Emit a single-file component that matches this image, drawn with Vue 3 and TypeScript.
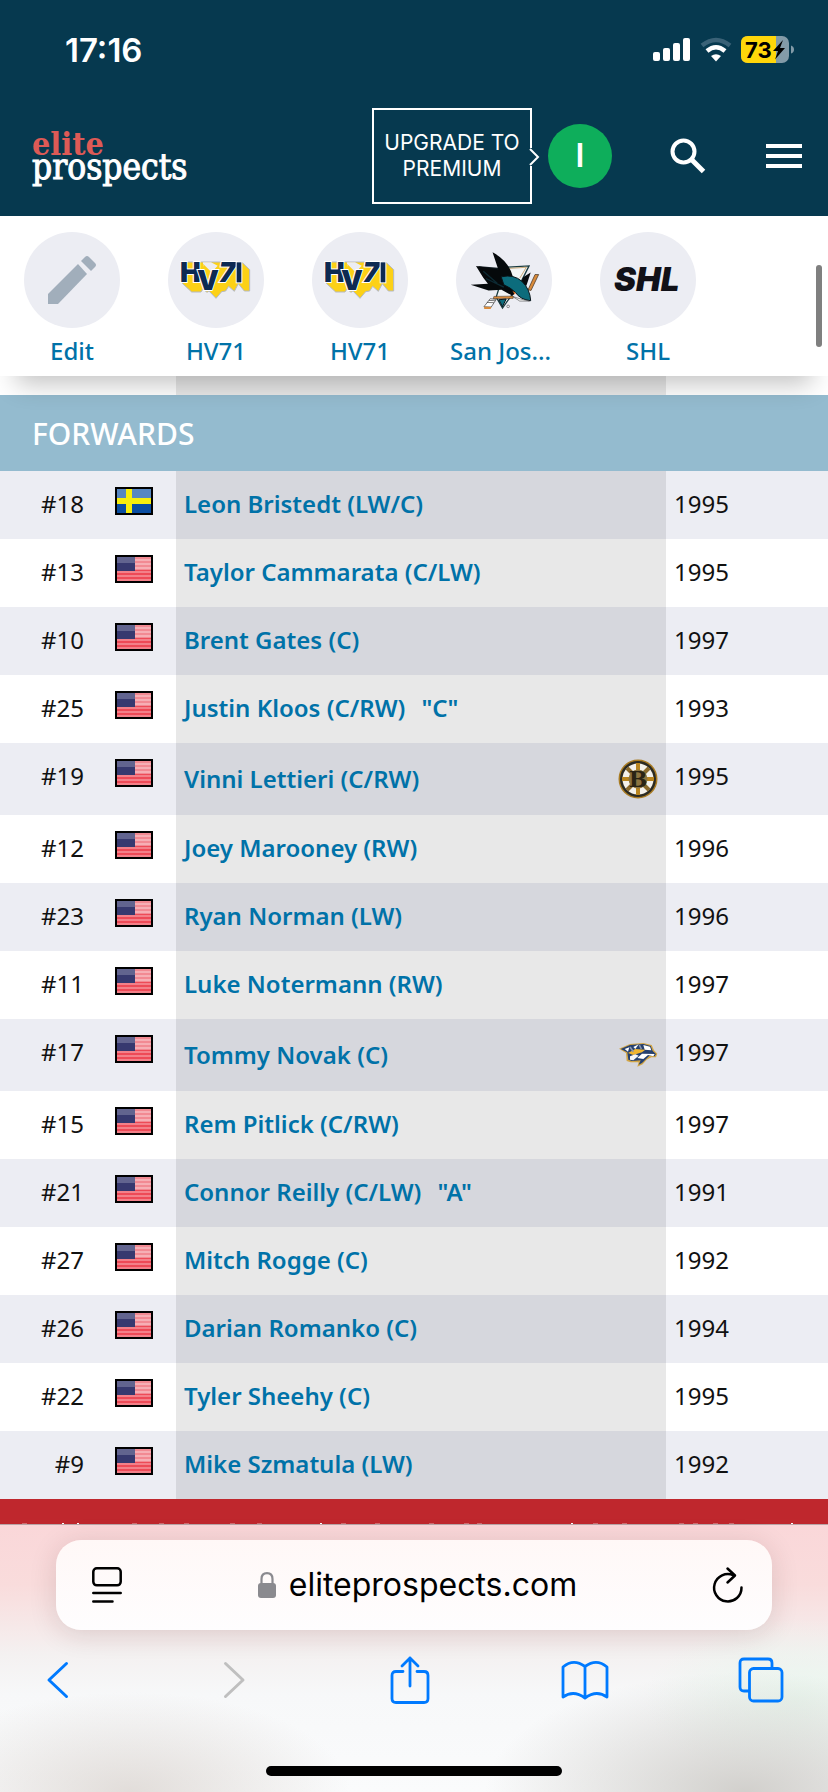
<script setup lang="ts">
interface Player {
  num: string
  flag: 'se' | 'us'
  name: string
  role?: string
  year: number
  logo?: 'bruins' | 'predators'
}

interface Shortcut {
  label: string
  icon: 'edit' | 'hv71' | 'sharks' | 'shl'
  long?: boolean
}

const shortcuts: Shortcut[] = [
  { label: 'Edit', icon: 'edit' },
  { label: 'HV71', icon: 'hv71' },
  { label: 'HV71', icon: 'hv71' },
  { label: 'San Jos...', icon: 'sharks', long: true },
  { label: 'SHL', icon: 'shl' },
]

const players: Player[] = [
  { num: '#18', flag: 'se', name: 'Leon Bristedt (LW/C)', year: 1995 },
  { num: '#13', flag: 'us', name: 'Taylor Cammarata (C/LW)', year: 1995 },
  { num: '#10', flag: 'us', name: 'Brent Gates (C)', year: 1997 },
  { num: '#25', flag: 'us', name: 'Justin Kloos (C/RW)', role: '"C"', year: 1993 },
  { num: '#19', flag: 'us', name: 'Vinni Lettieri (C/RW)', year: 1995, logo: 'bruins' },
  { num: '#12', flag: 'us', name: 'Joey Marooney (RW)', year: 1996 },
  { num: '#23', flag: 'us', name: 'Ryan Norman (LW)', year: 1996 },
  { num: '#11', flag: 'us', name: 'Luke Notermann (RW)', year: 1997 },
  { num: '#17', flag: 'us', name: 'Tommy Novak (C)', year: 1997, logo: 'predators' },
  { num: '#15', flag: 'us', name: 'Rem Pitlick (C/RW)', year: 1997 },
  { num: '#21', flag: 'us', name: 'Connor Reilly (C/LW)', role: '"A"', year: 1991 },
  { num: '#27', flag: 'us', name: 'Mitch Rogge (C)', year: 1992 },
  { num: '#26', flag: 'us', name: 'Darian Romanko (C)', year: 1994 },
  { num: '#22', flag: 'us', name: 'Tyler Sheehy (C)', year: 1995 },
  { num: '#9', flag: 'us', name: 'Mike Szmatula (LW)', year: 1992 },
]

const specks = [24, 134, 161, 186, 232, 259, 343, 377, 431, 466, 479, 595, 624, 681, 695, 715, 731]
const bars = [63, 78, 321, 572, 792]
</script>

<template>
  <div class="screen">
    <header class="top">
      <div class="status">
        <span class="clock">17:16</span>
        <div class="status-icons">
          <svg width="38" height="24" viewBox="0 0 38 24" fill="#fff">
            <rect x="0" y="14" width="7" height="9" rx="2" />
            <rect x="10" y="10" width="7" height="13" rx="2" />
            <rect x="20" y="5" width="7" height="18" rx="2" />
            <rect x="30" y="0" width="7" height="23" rx="2" />
          </svg>
          <svg width="32" height="24" viewBox="0 0 32 24" fill="none">
            <path d="M2 7.500Q16-3.500 30 7.500" stroke="#3a6277" stroke-width="4.500" />
            <path d="M7 13Q16 5.500 25 13" stroke="#fff" stroke-width="4.500" />
            <path d="M11 18Q16 14.500 21 18L16 23.500Z" fill="#fff" />
          </svg>
          <svg class="battery" width="54" height="28" viewBox="0 0 54 28">
            <rect width="48" height="27" rx="7" fill="#839ba8" />
            <path d="M7 0H35V27H7Q0 27 0 20V7Q0 0 7 0Z" fill="#ffd60a" />
            <path d="M50 9.500Q53 10.500 53 13.500T50 17.500Z" fill="#839ba8" />
            <text x="4" y="22" class="charge">73</text>
            <path d="M42 4L32 15H37L34 23.500L44 12H39Z" fill="#000" />
          </svg>
        </div>
      </div>
      <div class="bar">
        <a href="#" class="logo">
          <span class="logo-elite">elite</span>
          <span class="logo-prospects">prospects</span>
        </a>
        <a href="#" class="upgrade">
          UPGRADE TO<br />PREMIUM
          <svg class="pointer" width="10" height="18" viewBox="0 0 10 18">
            <path d="M0 0V18H2L9 9L2 0Z" fill="#06394f" />
            <path d="M0 1L8 9L0 17" fill="none" stroke="#fff" stroke-width="2" />
          </svg>
        </a>
        <button class="avatar">I</button>
        <button class="icon-btn search" aria-label="Search">
          <svg width="36" height="36" viewBox="0 0 36 36" fill="none" stroke="#fff">
            <circle cx="13.500" cy="13.500" r="11" stroke-width="4" />
            <path d="M21 21L33.500 33.500" stroke-width="5" />
          </svg>
        </button>
        <button class="icon-btn" aria-label="Menu">
          <svg width="36" height="24" viewBox="0 0 36 24" fill="#fff">
            <rect width="36" height="4" /><rect y="10" width="36" height="4" /><rect y="20" width="36" height="4" />
          </svg>
        </button>
      </div>
    </header>

    <nav class="quick">
      <a v-for="(s, i) in shortcuts" :key="i" href="#" class="quick-item">
        <span class="disc">
          <svg v-if="s.icon === 'edit'" width="48" height="48" viewBox="0 0 48 48" fill="#a1aebb">
            <path d="M0 38L30 8L39 18L10 48H0Z" />
            <path d="M33 5L37 1Q39-1 41 1L47 7Q49 9 47 11L43 15Z" />
          </svg>
          <svg v-else-if="s.icon === 'hv71'" width="70" height="38" viewBox="0 0 210 114">
            <path d="M3 64V66L32 93H60L66 84L78 94L84 90L105 112L122 92L134 90L143 76L160 91L172 68L190 90H206V26L182 3H10L3 20Z" fill="#fcd116" stroke="#b4b9c4" stroke-width="3" />
            <path d="M66 14L90 36L110 14L90 4H66Z" fill="#ecedf3" />
            <path d="M66 8L96 38H72Z" fill="#fcd116" />
            <g class="hv" fill="#0d2a52" stroke="#fff" stroke-width="6" paint-order="stroke">
              <text x="-3" y="64" font-size="83">H</text>
              <text x="113" y="64" font-size="83" font-style="italic">7</text>
              <text x="48" y="88" font-size="83">V</text>
              <rect x="167" y="4" width="14" height="60" />
            </g>
          </svg>
          <svg v-else-if="s.icon === 'sharks'" width="71" height="61" viewBox="166 100 212 184">
            <path d="M225 166L190 148L270 155Z" fill="#101b20" />
            <path d="M275 152L346 148L322 196L266 275L247 242Z" fill="#f3f5f5" stroke="#1a3c40" stroke-width="4" />
            <path d="M280 156L338 152L318 185" fill="none" stroke="#b5863e" stroke-width="2" />
            <path d="M375 174L364 174L343 220L352 222Z" fill="#d98b3b" stroke="#35281d" stroke-width="2" />
            <path d="M320 205L328 182L351 168L338 208Z" fill="#070b0d" />
            <path d="M236 107L253 158L186 148L208 184L222 202L170 205L224 222L263 220L296 238L330 205L298 182Q284 132 236 107Z" fill="#05090b" />
            <path d="M262 181Q300 172 325 195Q349 218 351 253Q320 250 305 228Q290 213 270 205Z" fill="#0c6c7c" stroke="#081318" stroke-width="3" />
            <path d="M208 164L250 200M216 186L270 212" stroke="#0d2a33" stroke-width="4" />
            <path d="M296 240Q320 249 348 254L318 254Z" fill="#fff" stroke="#222" stroke-width="1.500" />
            <path d="M240 240L298 239V246L238 247Z" fill="#d98b3b" stroke="#35281d" stroke-width="1.500" />
            <path d="M229 247L247 249L232 272L210 271Z" fill="#fff" stroke="#333" stroke-width="2" />
            <path d="M219 258L240 259M225 252L244 253" stroke="#333" stroke-width="2" />
            <path d="M210 271L233 272L230 278H211Z" fill="#d98b3b" />
            <path d="M255 250L266 271L277 248Z" fill="#0c6c7c" stroke="#081318" stroke-width="3" />
            <circle cx="283" cy="270" r="4" fill="none" stroke="#333" stroke-width="1.500" />
            <path d="M296 224L306 229L303 235Z" fill="#e8792d" />
          </svg>
          <svg v-else width="68" height="26" viewBox="0 0 68 26">
            <text x="0" y="24" class="shl">SHL</text>
          </svg>
        </span>
        <span class="quick-label" :class="{ long: s.long }">{{ s.label }}</span>
      </a>
      <span class="thumb"></span>
    </nav>

    <main>
      <table class="roster">
        <colgroup>
          <col class="c-num" /><col class="c-flag" /><col /><col class="c-year" />
        </colgroup>
        <tbody>
          <tr class="peek"><td></td><td></td><td class="name"></td><td></td></tr>
          <tr class="section"><th colspan="4" scope="colgroup">FORWARDS</th></tr>
          <tr v-for="p in players" :key="p.num" class="player">
            <td class="num">{{ p.num }}</td>
            <td class="flag">
              <svg v-if="p.flag === 'se'" width="38" height="28" viewBox="0 0 38 28">
                <rect width="38" height="28" fill="#000" />
                <rect x="2" y="2" width="34" height="24" fill="#0b4ea2" />
                <rect x="2" y="2" width="34" height="11" fill="#5787c1" />
                <path d="M11 2H17V26H11ZM2 11H36V17H2Z" fill="#f7ee0c" />
              </svg>
              <svg v-else width="38" height="28" viewBox="0 0 38 28">
                <rect width="38" height="28" fill="#000" />
                <rect x="2" y="2" width="34" height="24" fill="#ee4a57" />
                <rect x="2" y="2" width="34" height="13" fill="#f28a93" />
                <path d="M2 5H36M2 9H36M2 13H36" stroke="#f8bcc1" stroke-width="1.500" />
                <path d="M2 17H36M2 21H36M2 25H36" stroke="#f5929a" stroke-width="1.500" />
                <rect x="2" y="2" width="18" height="14" fill="#37396f" />
                <rect x="2" y="2" width="18" height="6" fill="#62648f" />
              </svg>
            </td>
            <td class="name">
              <div class="name-line">
                <a href="#">{{ p.name }}</a>
                <span v-if="p.role" class="role">{{ p.role }}</span>
                <svg v-if="p.logo === 'bruins'" class="team" width="40" height="40" viewBox="0 0 40 40">
                  <circle cx="20" cy="20" r="19.500" fill="#a97b22" />
                  <circle cx="20" cy="20" r="18" fill="#2b2a22" />
                  <circle cx="20" cy="20" r="15.500" fill="#f4f1ea" />
                  <path d="M20 4V36M4 20H36" stroke="#b9851f" stroke-width="4" />
                  <path d="M9 9L31 31M31 9L9 31" stroke="#8a6a2c" stroke-width="4" />
                  <circle cx="20" cy="20" r="9.500" fill="#8c7440" />
                  <text x="20" y="28" text-anchor="middle" class="b-mark">B</text>
                </svg>
                <svg v-else-if="p.logo === 'predators'" class="team" width="40" height="40" viewBox="114 76 120 120">
                  <path d="M117 117L150 103L190 100L215 106L222 122L232 132L228 143L214 143L200 150L188 164L172 171L176 158L152 158L140 154L138 130Z" fill="#d2a545" />
                  <path d="M122 118L150 106L190 103L212 109L218 124L228 133L224 140L208 138L186 160L176 165L182 152L156 154L145 150L142 128Z" fill="#25406f" />
                  <path d="M134 118L148 113L144 126ZM160 112L176 104L166 118ZM190 106L210 111L214 122L194 120ZM186 132L224 133L220 140L204 136L190 148L172 145Z" fill="#fff" />
                  <path d="M144 130L166 118L196 120L186 128L160 136Z" fill="#f0b530" />
                  <path d="M150 140L166 134L176 138L160 152L150 150Z" fill="#f5f6f8" />
                  <path d="M178 106L184 118M150 112L160 126" stroke="#8995ae" stroke-width="5" />
                </svg>
              </div>
            </td>
            <td class="year">{{ p.year }}</td>
          </tr>
        </tbody>
      </table>
    </main>

    <footer class="ticker">
      <svg width="828" height="2" viewBox="0 0 828 2">
        <rect v-for="x in specks" :key="x" :x="x - 2" y="1" width="5" height="1" fill="#d06a6e" />
        <rect v-for="x in bars" :key="x" :x="x - 1" y="1" width="2" height="1" fill="#fff" />
      </svg>
    </footer>

    <section class="browser">
      <div class="address">
        <button class="icon-btn" aria-label="Page settings">
          <svg width="30" height="36" viewBox="0 0 30 36" fill="none" stroke="#000" stroke-width="2.500" stroke-linecap="round">
            <rect x="1.300" y="1.300" width="27.400" height="17" rx="3.500" />
            <path d="M1.300 26H28.700M1.300 34.500H20.500" />
          </svg>
        </button>
        <button class="url">
          <svg width="18" height="26" viewBox="0 0 18 26">
            <path d="M3.500 12V7Q3.500 1.200 9 1.200T14.500 7V12" fill="none" stroke="#8a8a8f" stroke-width="2.200" />
            <rect y="11" width="18" height="15" rx="3" fill="#8a8a8f" />
          </svg>
          <span>eliteprospects.com</span>
        </button>
        <button class="icon-btn" aria-label="Reload">
          <svg width="30" height="36" viewBox="0 0 30 36" fill="none" stroke="#000" stroke-width="2.500" stroke-linecap="round" stroke-linejoin="round">
            <path d="M28.500 20.500A13.700 13.700 0 1 1 20.500 8.300" />
            <path d="M14.500 1.500L22 8.500L14.500 15.500" />
          </svg>
        </button>
      </div>
      <div class="tools">
        <button class="icon-btn" aria-label="Back">
          <svg width="22" height="38" viewBox="0 0 22 38" fill="none" stroke="#007aff" stroke-width="3" stroke-linecap="round" stroke-linejoin="round"><path d="M19.500 2.500L2 19L19.500 35.500" /></svg>
        </button>
        <button class="icon-btn" aria-label="Forward">
          <svg width="22" height="38" viewBox="0 0 22 38" fill="none" stroke="#bfbfbf" stroke-width="3" stroke-linecap="round" stroke-linejoin="round"><path d="M2.500 2.500L20 19L2.500 35.500" /></svg>
        </button>
        <button class="icon-btn" aria-label="Share">
          <svg width="40" height="48" viewBox="0 0 40 48" fill="none" stroke="#007aff" stroke-width="2.800" stroke-linecap="round" stroke-linejoin="round">
            <path d="M13 15.500H6Q2 15.500 2 19.500V42.500Q2 46.500 6 46.500H34Q38 46.500 38 42.500V19.500Q38 15.500 34 15.500H27" />
            <path d="M20 30V2M12 10L20 2L28 10" />
          </svg>
        </button>
        <button class="icon-btn" aria-label="Bookmarks">
          <svg width="48" height="40" viewBox="0 0 48 40" fill="none" stroke="#007aff" stroke-width="2.800" stroke-linecap="round" stroke-linejoin="round">
            <path d="M24 38Q12.500 29.500 2 37V7Q12.500-2 24 6.500Q35.500-2 46 7V37Q35.500 29.500 24 38V6.500" />
          </svg>
        </button>
        <button class="icon-btn" aria-label="Tabs">
          <svg width="46" height="46" viewBox="0 0 46 46" fill="none" stroke="#007aff" stroke-width="2.800">
            <path d="M11.500 34H6Q2 34 2 30V6Q2 2 6 2H30Q34 2 34 6V11.500" />
            <rect x="11.500" y="11.500" width="32.500" height="32.500" rx="4" />
          </svg>
        </button>
      </div>
      <div class="home"></div>
    </section>
  </div>
</template>

<style>
body {
  margin: 0;
  background: #fff;
}
</style>

<style scoped>
.screen {
  display: flex;
  flex-direction: column;
  min-height: 100vh;
  overflow: hidden;
  font-family: 'Noto Sans', 'Open Sans', sans-serif;
  font-size: 24px;
  color: #111;
}
a {
  text-decoration: none;
  color: #0072a8;
}
svg {
  display: block;
  flex: none;
  overflow: visible;
}
button {
  border: 0;
  padding: 0;
  background: none;
  color: inherit;
}
.icon-btn {
  display: flex;
  align-items: center;
  justify-content: center;
}
.top {
  background: #06394f;
  color: #fff;
}
.status {
  display: flex;
  align-items: center;
  justify-content: space-between;
  height: 100px;
  padding: 0 33px 0 65px;
}
.clock {
  font: 600 33px/40px Inter, sans-serif;
}
.status-icons {
  display: flex;
  align-items: center;
  gap: 9px;
}
.charge {
  font: 700 22px Inter, sans-serif;
}
.bar {
  display: flex;
  align-items: center;
  padding: 8px 26px 12px 32px;
}
.logo {
  display: flex;
  flex-direction: column;
  margin-right: auto;
  font-family: 'DejaVu Serif Condensed', 'DejaVu Serif', serif;
  font-size: 35px;
  line-height: 23px;
}
.logo-elite {
  color: #dd5a56;
  font-weight: 700;
  font-size: 32px;
}
.logo-prospects {
  color: #fff;
  -webkit-text-stroke: 1px #fff;
}
.upgrade {
  position: relative;
  box-sizing: border-box;
  width: 160px;
  padding: 20px 0;
  border: 2px solid #fff;
  color: #fff;
  text-align: center;
  white-space: nowrap;
  font: 400 21px/26px Inter, sans-serif;
}
.upgrade .pointer {
  position: absolute;
  right: -10px;
  top: 38px;
}
.avatar {
  width: 64px;
  height: 64px;
  margin-left: 16px;
  border-radius: 50%;
  background: #0eae5b;
  color: #fff;
  font: 600 32px/64px Inter, sans-serif;
}
.search {
  margin: 0 60px 0 58px;
}
.quick {
  position: relative;
  z-index: 1;
  display: flex;
  gap: 32px;
  padding: 16px 16px 8px;
  background: #fff;
  box-shadow: 0 24px 24px -16px rgba(0, 0, 0, 0.24);
}
.quick-item {
  display: flex;
  flex-direction: column;
  align-items: center;
  gap: 6px;
  width: 112px;
}
.disc {
  display: flex;
  align-items: center;
  justify-content: center;
  width: 96px;
  height: 96px;
  border-radius: 50%;
  background: #ecedf3;
}
.quick-label {
  font-weight: 500;
  line-height: 34px;
  white-space: nowrap;
}
.quick-label.long {
  width: 108px;
}
.hv {
  font-family: Inter, sans-serif;
  font-weight: 900;
}
.shl {
  font: italic 900 33px Inter, sans-serif;
  fill: #111118;
}
.thumb {
  position: absolute;
  right: 6px;
  top: 49px;
  width: 6px;
  height: 82px;
  border-radius: 3px;
  background: #7f7f7f;
}
.roster {
  width: 100%;
  table-layout: fixed;
  border-collapse: collapse;
}
.roster td,
.roster th {
  padding: 0;
  vertical-align: top;
}
.c-num {
  width: 92px;
}
.c-flag {
  width: 84px;
}
.c-year {
  width: 162px;
}
.roster .name {
  background: rgba(0, 0, 0, 0.09);
}
.peek td {
  height: 19px;
}
.roster .section th {
  height: 76px;
  padding-left: 32px;
  background: #94bbcf;
  color: #fff;
  font-size: 30px;
  font-weight: 500;
  text-align: left;
  vertical-align: middle;
}
.roster .player td {
  height: 36px;
  padding: 16px 8px;
  line-height: 34px;
}
.player:nth-child(odd) {
  background: #ecedf3;
}
.roster .player .num {
  text-align: right;
}
.roster .player .flag {
  padding-left: 23px;
}
.name-line {
  display: flex;
  align-items: center;
  gap: 16px;
  font-weight: 600;
  color: #0072a8;
}
.team {
  margin-left: auto;
}
.b-mark {
  font: 700 22px 'DejaVu Serif', serif;
  fill: #2a2414;
}
.ticker {
  display: flex;
  align-items: flex-end;
  height: 25px;
  background: #bf272d;
}
.browser {
  flex: 1;
  display: flex;
  flex-direction: column;
  box-sizing: border-box;
  padding: 15px 0 16px;
  border-top: 1px solid #b9a5a7;
  background:
    radial-gradient(ellipse 220px 100px at 130px 100%, rgba(215, 208, 203, 0.7), transparent),
    radial-gradient(ellipse 260px 120px at 90% 100%, rgba(205, 203, 199, 0.9), transparent),
    radial-gradient(ellipse 150px 80px at 96% 65%, rgba(232, 245, 236, 0.9), transparent),
    linear-gradient(#fad7d9 0, #f9dcdc 60px, #f4f1f1 130px, #f7f8f9 170px, #fafbfc 100%);
}
.address {
  display: flex;
  align-items: center;
  height: 90px;
  margin: 0 56px;
  padding: 0 29px 0 36px;
  border-radius: 25px;
  background: linear-gradient(#fff8f7, #fefdfe);
  box-shadow: 0 4px 28px rgba(60, 20, 20, 0.14);
}
.url {
  flex: 1;
  display: flex;
  align-items: center;
  justify-content: center;
  gap: 13px;
  color: #000;
  font: 400 32px/40px Inter, sans-serif;
}
.tools {
  display: flex;
  align-items: center;
  justify-content: space-between;
  padding: 0 35px 0 26px;
  height: 100px;
}
.tools .icon-btn {
  width: 64px;
}
.home {
  width: 296px;
  height: 10px;
  margin: auto auto 0;
  border-radius: 5px;
  background: #000;
}
</style>
